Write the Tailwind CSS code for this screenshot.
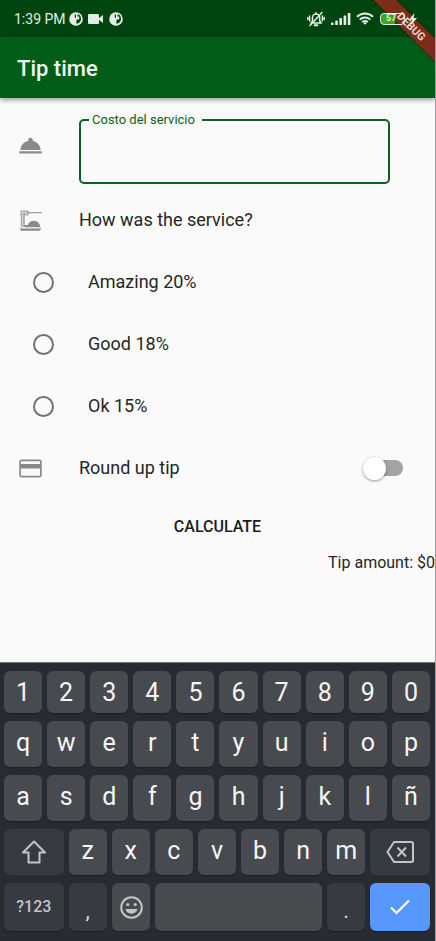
<!DOCTYPE html>
<html lang="es">
<head>
<meta charset="utf-8">
<meta name="viewport" content="width=device-width, initial-scale=1">
<title>Tip time</title>
<script src="https://cdn.jsdelivr.net/npm/@tailwindcss/browser@4"></script>
</head>
<body class="font-[Roboto,sans-serif] bg-[#fafafa]">
<svg class="hidden" aria-hidden="true">
  <symbol id="app" viewBox="0 0 14 14"><circle cx="7" cy="7" r="6.800" fill="#e2efe4"/><path d="M5.800 2.600h1.200v3.200H5.800zM8.600 2.600h1.200a4.800 4.800 0 0 1 2.200 4.400a4.800 4.800 0 0 1-4.600 4.800V7.600h2.800V4.400H8.600z" fill="#00420f"/></symbol>
</svg>
<div class="relative flex min-h-screen flex-col overflow-hidden border-r border-[#9b9b9b] text-lg text-[#262626]">

  <!-- Status bar -->
  <div class="flex h-[37px] shrink-0 items-center bg-[#004410] pl-[14px] pr-[18px] text-[#e2efe4] *:z-30">
    <span class="text-sm">1:39 PM</span>
    <svg class="ml-[3px] size-[14px]"><use href="#app"/></svg>
    <svg class="ml-[5px] h-[10px] w-[15px]" viewBox="0 0 15 10" fill="currentColor"><rect width="11" height="10" rx="1.200"/><path d="M10.500 4.500L15 1v8l-4.500-3.500z"/></svg>
    <svg class="ml-[6px] size-[14px]"><use href="#app"/></svg>
    <span class="grow"></span>
    <svg class="h-4 w-[18px]" viewBox="0 0 18 16" fill="none" stroke="currentColor" stroke-width="1.500" stroke-linecap="round"><path d="M4.300 12h9.700l-1.300-2V6.500a3.600 3.600 0 0 0-7.200 0V10zM9 2.800V1.800M15 1.500L3 14.500M2.600 5v5M.8 6.500v2M15.400 5v5M17.200 6.500v2"/><path d="M7.600 14.200h2.800" stroke-width="2"/></svg>
    <svg class="ml-[6px] h-3 w-5" viewBox="0 0 20 12" fill="currentColor"><rect x="0" y="9.500" width="2.600" height="2.500" rx=".6"/><rect x="4.200" y="7.500" width="2.600" height="4.500" rx=".6"/><rect x="8.400" y="5" width="2.600" height="7" rx=".6"/><rect x="12.600" y="2.500" width="2.600" height="9.500" rx=".6"/><rect x="16.800" y="0" width="2.600" height="12" rx=".6"/></svg>
    <svg class="ml-[5px] h-[13px] w-[18px]" viewBox="0 0 18 13" fill="none" stroke="currentColor" stroke-width="1.900"><path d="M1 4.800a11.500 11.500 0 0 1 16 0M3.700 7.600a7.600 7.600 0 0 1 10.600 0M6.200 10.100a4 4 0 0 1 5.600 0"/><path d="M9 12.800l-1.800-1.900a2.600 2.600 0 0 1 3.600 0z" fill="currentColor" stroke="none"/></svg>
    <div class="ml-[6px] flex h-3 w-[25px] items-center rounded-[4px] border border-[#e2efe4] bg-linear-to-r from-[#3fa51d] from-60% to-transparent to-60% pl-[5px] text-[9px] font-bold leading-none">57</div>
    <svg class="ml-1 h-3 w-2" viewBox="0 0 8 12" fill="currentColor"><path d="M5.500 0L0 6.800h3L2 12l6-7H4.600z"/></svg>
  </div>

  <!-- App bar -->
  <header class="z-10 flex h-[61px] shrink-0 items-center bg-[#025d18] px-[17px] pt-1 shadow-[0_2px_5px_rgba(0,0,0,0.4)]">
    <h1 class="text-[22px] font-medium text-[#eefaf0]">Tip time</h1>
  </header>

  <!-- Debug ribbon -->
  <div class="absolute -right-[35px] top-[17px] z-20 flex h-4 w-[120px] rotate-45 items-center justify-center bg-[#7b2d18] pl-1 text-[11px] font-bold leading-none text-[#e6d5cf] shadow-[0_0_4px_rgba(0,0,0,0.4)]">DEBUG</div>

  <main class="grow">
    <div class="flex h-[91px] pl-[17px] pr-[45px] pt-[14px]">
      <svg class="mt-5 size-[27px] shrink-0" viewBox="0 0 24 24" fill="#8a8a8a"><path d="M2 17h20v2H2zM13.840 7.790A2.006 2.006 0 0 0 12 5a2.006 2.006 0 0 0-1.840 2.790C6.250 8.600 3.270 11.930 3 16h18c-.27-4.070-3.250-7.400-7.160-8.210z"/></svg>
      <fieldset class="ml-[35px] h-[72px] min-w-0 grow rounded-[5px] border-2 border-[#0b6122] px-2">
        <legend class="pl-[3px] pr-[7px] text-[13px] leading-4 text-[#0b6122]"><label for="cost">Costo del servicio</label></legend>
        <input id="cost" type="text" inputmode="decimal" class="h-12 w-full bg-transparent px-1 outline-none">
      </fieldset>
    </div>

    <div class="flex h-[62px] items-center px-[17px]">
      <svg class="size-[27px]" viewBox="0 0 24 24" fill="#8a8a8a"><path d="M2 19h20l-2 2H4zM7 18c0-.8-.3-1.500-.8-2H9.500c.8-2.200 2.800-3.800 5.300-3.800 3.200 0 5.700 2.500 6 5.800z"/><path d="M3 3h6.500l1.500 1.400h11v1.200H11L9.500 7.500H3z" opacity=".8"/><path d="M3.300 7.500H7V18H3.300z" opacity=".7"/><path d="M3 5.200h7M5 3v15M7.800 3v4.500" stroke="#fafafa" stroke-width=".5"/></svg>
      <span class="ml-[35px]">How was the service?</span>
    </div>

    <div role="radiogroup" aria-label="How was the service?">
      <label class="flex h-[62px] items-center gap-[34px] px-[33px]"><input type="radio" name="service" value="20" class="size-[21px] appearance-none rounded-full border-2 border-[#727272] checked:border-[6px] checked:border-[#0b6122]"><span>Amazing 20%</span></label>
      <label class="flex h-[62px] items-center gap-[34px] px-[33px]"><input type="radio" name="service" value="18" class="size-[21px] appearance-none rounded-full border-2 border-[#727272] checked:border-[6px] checked:border-[#0b6122]"><span>Good 18%</span></label>
      <label class="flex h-[62px] items-center gap-[34px] px-[33px]"><input type="radio" name="service" value="15" class="size-[21px] appearance-none rounded-full border-2 border-[#727272] checked:border-[6px] checked:border-[#0b6122]"><span>Ok 15%</span></label>
    </div>

    <label class="flex h-[62px] items-center pl-[17px] pr-8">
      <svg class="size-[27px]" viewBox="0 0 24 24" fill="#8a8a8a"><path d="M20 4H4c-1.110 0-1.990.89-1.990 2L2 18c0 1.110.89 2 2 2h16c1.110 0 2-.89 2-2V6c0-1.110-.89-2-2-2zm.5 14.500h-17V12h17v6.500zm0-10.500h-17V5.500h17V8z"/></svg>
      <span class="ml-[35px] grow">Round up tip</span>
      <input type="checkbox" role="switch" class="flex h-4 w-[37px] appearance-none items-center rounded-full bg-[#a3a3a3] before:-ml-[3px] before:size-[23px] before:shrink-0 before:rounded-full before:bg-white before:shadow-[0_1px_3px_rgba(0,0,0,0.4)] checked:bg-[#7fb08b] checked:before:ml-[17px] checked:before:bg-[#0b6122]">
    </label>

    <div class="flex h-14 items-center justify-center">
      <button type="button" class="px-4 py-2 text-base font-medium text-[#1c1c1c]">CALCULATE</button>
    </div>
    <p class="text-right text-base leading-4">Tip amount: $0</p>
  </main>

  <!-- Keyboard -->
  <section aria-label="Keyboard" class="flex flex-col gap-2 border-t border-[#777a7d] bg-[#282b32] pb-[10px] pl-1 pr-[5px] pt-2 text-[25px] leading-none text-[#f5f5f5]">
    <div class="grid h-[42px] grid-cols-10 gap-[5px] *:rounded-md *:bg-[#474a4e] *:shadow-[0_1px_1px_rgba(0,0,0,0.3)]">
      <button>1</button><button>2</button><button>3</button><button>4</button><button>5</button><button>6</button><button>7</button><button>8</button><button>9</button><button>0</button>
    </div>
    <div class="grid h-[46px] grid-cols-10 gap-[5px] *:rounded-md *:bg-[#474a4e] *:pb-1 *:shadow-[0_1px_1px_rgba(0,0,0,0.3)]">
      <button>q</button><button>w</button><button>e</button><button>r</button><button>t</button><button>y</button><button>u</button><button>i</button><button>o</button><button>p</button>
    </div>
    <div class="grid h-[46px] grid-cols-10 gap-[5px] *:rounded-md *:bg-[#474a4e] *:pb-1 *:shadow-[0_1px_1px_rgba(0,0,0,0.3)]">
      <button>a</button><button>s</button><button>d</button><button>f</button><button>g</button><button>h</button><button>j</button><button>k</button><button>l</button><button>ñ</button>
    </div>
    <div class="flex h-[46px] gap-[5px] *:rounded-md">
      <button aria-label="Shift" class="flex w-[14%] shrink-0 items-center justify-center bg-[#373a40]"><svg class="h-6 w-[26px]" viewBox="0 0 26 24" fill="none" stroke="#c3c5c7" stroke-width="2" stroke-linejoin="round"><path d="M13 1.500L2 12.500h5.500V22.500h11V12.500H24z"/></svg></button>
      <div class="grid grow grid-cols-7 gap-[5px] *:rounded-md *:bg-[#474a4e] *:pb-1 *:shadow-[0_1px_1px_rgba(0,0,0,0.3)]">
        <button>z</button><button>x</button><button>c</button><button>v</button><button>b</button><button>n</button><button>m</button>
      </div>
      <button aria-label="Backspace" class="flex w-[14%] shrink-0 items-center justify-center bg-[#373a40]"><svg class="h-[22px] w-7" viewBox="0 0 28 22" fill="none" stroke="#c3c5c7" stroke-width="2" stroke-linejoin="round"><path d="M8 1h17.500q1.500 0 1.500 1.500v17q0 1.500-1.500 1.500H8L1.500 11zM11.500 6.500l8.500 9M20 6.500l-8.500 9"/></svg></button>
    </div>
    <div class="flex h-12 gap-[5px] *:rounded-md *:shadow-[0_1px_1px_rgba(0,0,0,0.3)]">
      <button class="w-[14%] shrink-0 bg-[#373a40] text-base font-medium text-[#c3c5c7]">?123</button>
      <button class="w-[9%] shrink-0 bg-[#373a40] pt-2 text-[22px] text-[#d5d6d8]">,</button>
      <button aria-label="Emoji" class="flex w-[9%] shrink-0 items-center justify-center bg-[#474a4e]"><svg class="size-[23px]" viewBox="0 0 23 23" fill="none" stroke="#c3c5c7" stroke-width="2"><circle cx="11.500" cy="11.500" r="10.300"/><g fill="#c3c5c7" stroke="none"><circle cx="7.800" cy="8.500" r="1.600"/><circle cx="15.200" cy="8.500" r="1.600"/><path d="M5.500 13h12a6.200 6.200 0 0 1-12 0z"/></g></svg></button>
      <button aria-label="Space" class="grow bg-[#474a4e]"></button>
      <button class="w-[9%] shrink-0 bg-[#373a40] pt-2 text-[22px] text-[#d5d6d8]">.</button>
      <button aria-label="Done" class="flex w-[14%] shrink-0 items-center justify-center bg-[#5897fb]"><svg class="h-4 w-5" viewBox="0 0 20 16" fill="none" stroke="#fff" stroke-width="2.200"><path d="M1 8.500L6.500 14L19 1.500"/></svg></button>
    </div>
  </section>
</div>
</body>
</html>
